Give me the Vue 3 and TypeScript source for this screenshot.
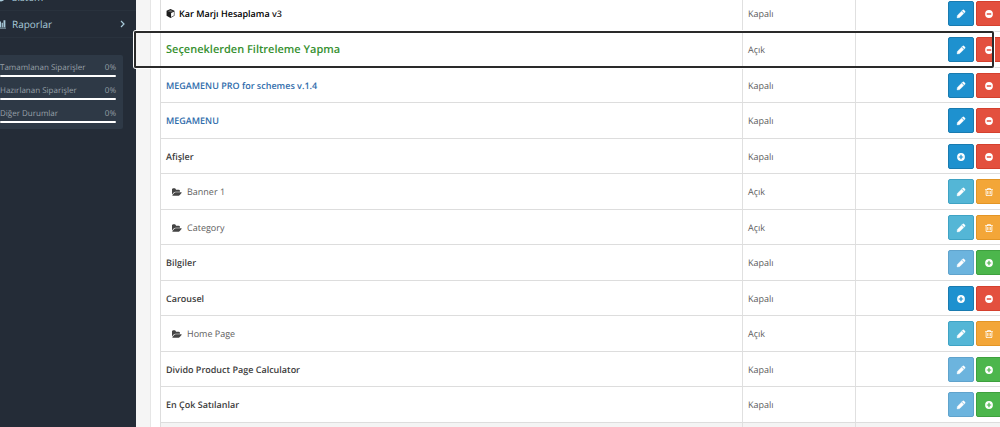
<script setup lang="ts">
type Kind = 'module' | 'featured' | 'link' | 'group' | 'child'
type Icon = 'pencil' | 'minus' | 'plus' | 'trash'
interface Action { icon: Icon; tone: string; label: string }
interface Row { name: string; suffix?: string; kind: Kind; status: string; actions: Action[] }

const edit: Action = { icon: 'pencil', tone: 'primary', label: 'Düzenle' }
const editInfo: Action = { icon: 'pencil', tone: 'info', label: 'Düzenle' }
const editOff: Action = { icon: 'pencil', tone: 'muted', label: 'Düzenle' }
const add: Action = { icon: 'plus', tone: 'primary', label: 'Ekle' }
const install: Action = { icon: 'plus', tone: 'success', label: 'Kur' }
const remove: Action = { icon: 'minus', tone: 'danger', label: 'Kaldır' }
const trash: Action = { icon: 'trash', tone: 'warning', label: 'Sil' }

const rows: Row[] = [
  { name: 'Kar Marjı Hesaplama', suffix: 'v3', kind: 'module', status: 'Kapalı', actions: [edit, remove] },
  { name: 'Seçeneklerden Filtreleme Yapma', kind: 'featured', status: 'Açık', actions: [edit, remove] },
  { name: 'MEGAMENU PRO for schemes v.1.4', kind: 'link', status: 'Kapalı', actions: [edit, remove] },
  { name: 'MEGAMENU', kind: 'link', status: 'Kapalı', actions: [edit, remove] },
  { name: 'Afişler', kind: 'group', status: 'Kapalı', actions: [add, remove] },
  { name: 'Banner 1', kind: 'child', status: 'Açık', actions: [editInfo, trash] },
  { name: 'Category', kind: 'child', status: 'Açık', actions: [editInfo, trash] },
  { name: 'Bilgiler', kind: 'group', status: 'Kapalı', actions: [editOff, install] },
  { name: 'Carousel', kind: 'group', status: 'Kapalı', actions: [add, remove] },
  { name: 'Home Page', kind: 'child', status: 'Açık', actions: [editInfo, trash] },
  { name: 'Divido Product Page Calculator', kind: 'group', status: 'Kapalı', actions: [editOff, install] },
  { name: 'En Çok Satılanlar', kind: 'group', status: 'Kapalı', actions: [editOff, install] },
]

const stats: { label: string; value: string }[] = [
  { label: 'Tamamlanan Siparişler', value: '0%' },
  { label: 'Hazırlanan Siparişler', value: '0%' },
  { label: 'Diğer Durumlar', value: '0%' },
]
</script>

<template>
  <div class="page">
    <aside class="sidebar">
      <nav>
        <a href="#" class="nav-item">
          <svg class="nav-icon" viewBox="0 0 16 16"><circle cx="8" cy="8" r="5" fill="none" stroke="currentColor" stroke-width="4" /></svg>
          <span>Sistem</span>
        </a>
        <a href="#" class="nav-item">
          <svg class="nav-icon" viewBox="0 0 16 16"><path d="M0 1h1v13h15v1H0zM3 8h2v5H3zM6 4h2v9H6zM9 6h2v7H9zM12 2h3v11h-3z" fill="currentColor" /></svg>
          <span>Raporlar</span>
          <svg class="chevron" viewBox="0 0 8 8"><path d="M2 1l3 3-3 3" fill="none" stroke="currentColor" stroke-width="1.2" /></svg>
        </a>
      </nav>
      <ul class="stats">
        <li v-for="s in stats" :key="s.label">
          <div class="stat-line"><span>{{ s.label }}</span><span>{{ s.value }}</span></div>
          <div class="bar"></div>
        </li>
      </ul>
    </aside>

    <main class="content">
      <section class="panel">
        <table>
          <colgroup><col /><col class="col-status" /><col class="col-actions" /></colgroup>
          <tbody>
            <tr v-for="row in rows" :key="row.name">
              <td>
                <span v-if="row.kind === 'module'" class="name module">
                  <svg class="cube" viewBox="0 0 16 16">
                    <path d="M8 0l7 3v9l-7 4-7-4V3z" fill="currentColor" />
                    <path d="M9 7l5-2.3v6.700l-5 2.900z" fill="#fff" />
                    <path d="M3 3.800l5-2 5 2-5 2z" fill="#666" />
                  </svg>
                  <span><b>{{ row.name }}</b> {{ row.suffix }}</span>
                </span>
                <a v-else-if="row.kind === 'link'" href="#" class="name link">{{ row.name }}</a>
                <span v-else class="name" :class="row.kind">
                  <svg v-if="row.kind === 'child'" class="folder" viewBox="0 128 1920 1536"><path fill="currentColor" d="M1815 952q0 31-31 66l-336 396q-43 51-120.500 86.500t-143.500 35.500h-1088q-34 0-60.500-13t-26.500-43q0-31 31-66l336-396q43-51 120.500-86.500t143.500-35.500h1088q34 0 60.500 13t26.500 43zm-343-344v160h-832q-94 0-197 47.500t-164 119.500l-337 396-5 6v-985q0-92 66-158t158-66h320q92 0 158 66t66 158v32h544q92 0 158 66t66 158z" transform="translate(50 60)" /></svg>
                  <span>{{ row.name }}</span>
                </span>
              </td>
              <td>{{ row.status }}</td>
              <td>
                <div class="actions">
                  <button v-for="a in row.actions" :key="a.icon" type="button" :class="a.tone" :aria-label="a.label">
                    <svg viewBox="-1 -1 18 18">
                      <path v-if="a.icon === 'pencil'" fill="currentColor" d="M9 3l4 4-7.500 7.500L1 15l.5-4.500zM10 2l1-1q1-1 2.200 0L15 2.800q1 1.200 0 2.200l-1 1z" stroke="currentColor" stroke-width=".8" />
                      <path v-else-if="a.icon === 'minus'" fill="currentColor" fill-rule="evenodd" d="M8 1a7 7 0 1 0 0 14A7 7 0 0 0 8 1zM4 6.800h8v2.400H4z" />
                      <path v-else-if="a.icon === 'plus'" fill="currentColor" fill-rule="evenodd" d="M8 1a7 7 0 1 0 0 14A7 7 0 0 0 8 1zM6.900 4h2.200v2.900H12v2.200H9.100V12H6.900V9.100H4V6.900h2.900z" />
                      <path v-else fill="currentColor" fill-rule="evenodd" d="M5.500 1h5l1 2H15v1.500h-1V13q0 2-1.500 2h-9Q2 15 2 13V4.500H1V3h3.500zM6 3h4l-.5-.9h-3zM3.500 4.500V13q0 .8.500.8h8q.5 0 .5-.8V4.500zM5 6h1.200v6H5zM7.400 6h1.200v6H7.400zM9.800 6H11v6H9.800z" />
                    </svg>
                  </button>
                </div>
              </td>
            </tr>
            <tr class="section"><td></td><td></td><td></td></tr>
          </tbody>
        </table>
      </section>
    </main>
    <div class="focus-frame"></div>
  </div>
</template>

<style>
body {
  margin: 0;
  background: #f5f5f5;
}
html {
  overflow: hidden;
}
</style>

<style scoped>
.page {
  position: relative;
  display: flex;
  height: 100vh;
  overflow: hidden;
  font-family: "Open Sans", "Noto Sans", sans-serif;
  font-size: 9px;
  line-height: 12px;
  color: #606060;
  text-rendering: geometricPrecision;
}
.sidebar {
  flex: 0 0 136px;
  background: #242c37;
}
nav {
  margin-top: -16px;
}
.nav-item {
  display: flex;
  align-items: center;
  height: 26px;
  border-bottom: 1px solid #29323d;
  color: #a9cbda;
  font-size: 10px;
  text-decoration: none;
}
.nav-icon {
  width: 10px;
  height: 10px;
  margin: 0 6px 0 -4px;
}
.chevron {
  width: 8px;
  height: 8px;
  margin: 0 9px 0 auto;
}
.stats {
  list-style: none;
  margin: 17px 13px 0 0;
  padding: 7px 7px 6px 0;
  background: #2e3946;
  border-radius: 0 2px 2px 0;
  color: #98a0a8;
  font-size: 8px;
}
.stats li + li {
  margin-top: 8px;
}
.stat-line {
  display: flex;
  justify-content: space-between;
}
.bar {
  height: 2px;
  margin-top: 1px;
  border-radius: 1px;
  background: #fff;
}
.content {
  flex: 1;
  min-width: 0;
  padding-left: 14px;
  background: #f5f5f5;
}
.panel {
  margin-right: -12px;
  padding: 0 4px 0 9px;
  border-left: 1px solid #e6e6e6;
  background: #fff;
}
table {
  width: 100%;
  table-layout: fixed;
  border-collapse: separate;
  border-spacing: 0;
  border-left: 1px solid #ddd;
}
.col-status {
  width: 113px;
}
.col-actions {
  width: 152px;
}
td {
  box-sizing: border-box;
  height: 36px;
  padding: 0 5px;
  border-right: 1px solid #e0e0e0;
  border-bottom: 1px solid #ddd;
}
tr:nth-child(odd) td {
  height: 35px;
  padding-top: 1px;
}
tr:first-child td {
  height: 32px;
  padding-bottom: 5px;
}
.section td {
  background: #f4f4f4;
}
.name {
  display: flex;
  align-items: center;
  font-weight: 600;
  color: #3c3c3c;
}
.module {
  gap: 4px;
  color: #1c1c1c;
}
.module b {
  font-weight: 600;
  color: #000;
}
.featured {
  color: #36902f;
  font-size: 11px;
}
.link {
  color: #2f6cab;
  text-decoration: none;
}
.child {
  gap: 5px;
  padding-left: 6px;
  color: #606060;
  font-weight: 400;
}
.cube {
  width: 9px;
  height: 9px;
}
.folder {
  width: 10px;
  height: 8px;
  color: #444;
}
.actions {
  display: flex;
  justify-content: flex-end;
  gap: 2px;
}
button {
  display: flex;
  align-items: center;
  justify-content: center;
  box-sizing: border-box;
  width: 26px;
  height: 25px;
  padding: 0;
  border: 1px solid;
  border-radius: 2px;
  color: #fff;
}
button svg {
  width: 10px;
  height: 10px;
}
.primary {
  background: #1e91cf;
  border-color: #197bb0;
}
.danger {
  background: #e3503e;
  border-color: #d4402e;
}
.info {
  background: #54b6d6;
  border-color: #3fa3c4;
}
.warning {
  background: #f3a638;
  border-color: #e39525;
}
.success {
  background: #4cb64c;
  border-color: #3ea03e;
}
.muted {
  background: #6cb4de;
  border-color: #60a3cc;
}
.focus-frame {
  position: absolute;
  top: 31px;
  left: 134px;
  right: 6px;
  height: 37px;
  box-sizing: border-box;
  border: 2px solid #2a2a2a;
  border-radius: 2px;
  box-shadow: 0 0 0 1px #fff;
  pointer-events: none;
}
</style>
